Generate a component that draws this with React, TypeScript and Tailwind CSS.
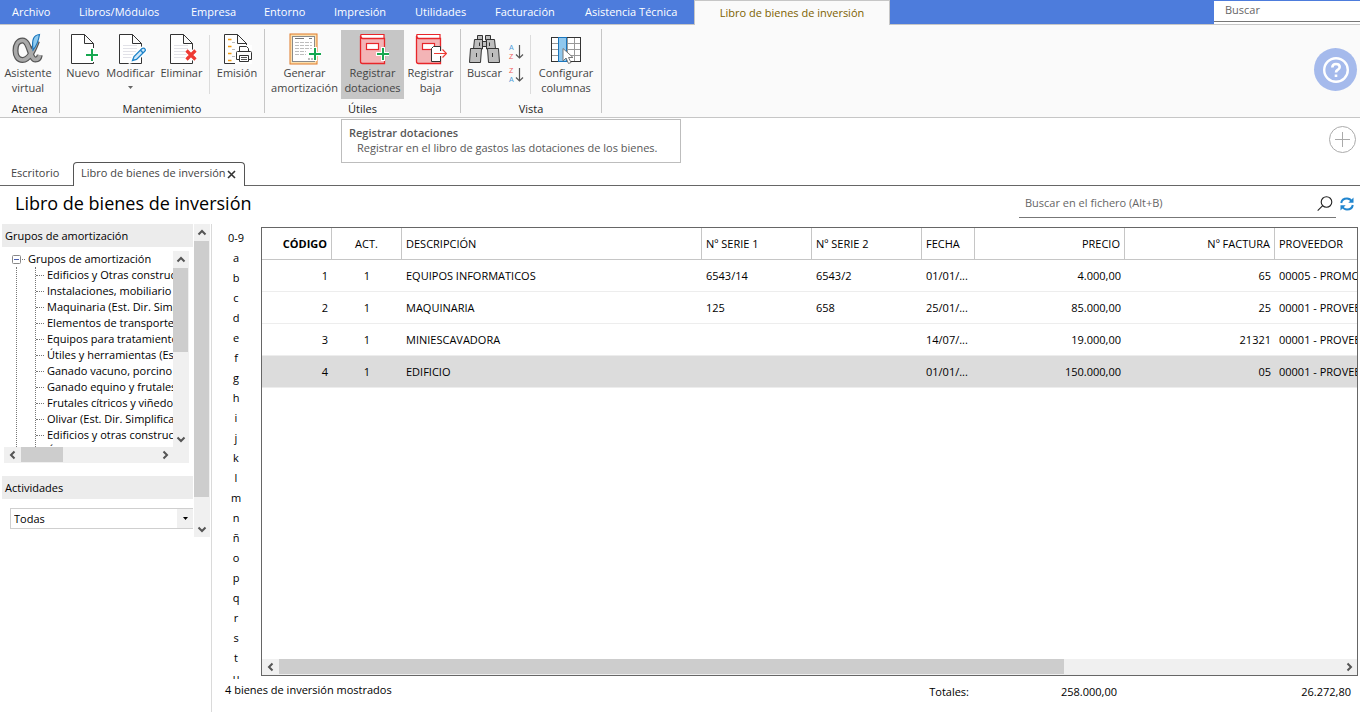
import React from "react";

/* ---------- Icons ---------- */

type IconProps = { children: React.ReactNode };

function Icon({ children }: IconProps) {
  return (
    <svg width="32" height="32" viewBox="0 0 32 32" fill="none" aria-hidden="true" className="shrink-0">
      {children}
    </svg>
  );
}

function Page() {
  return <path d="M4.500 1.500H17.500L26.500 10.500V30.500H4.500ZM17.500 1.500V10.500H26.500" fill="#fff" stroke="#333" />;
}

function PageLines() {
  return <path d="M8 12.500H22M8 15.500H22M8 18.500H22M8 21.500H22M8 24.500H20" stroke="#e2e2e8" />;
}

function Plus({ x, y }: { x: number; y: number }) {
  return (
    <g transform={`translate(${x} ${y})`}>
      <path d="M-7 0H7M0 -7V7" stroke="#fff" strokeWidth="4" />
      <path d="M-6 0H6M0 -6V6" stroke="#16a750" strokeWidth="2" />
    </g>
  );
}

function AlphaIcon() {
  const loop =
    "M25 8C22 16 17.500 27 10.500 27C6 27 3.500 23 3.500 17.500C3.500 12 6 7.500 10.500 7.500C18 7.500 17.500 26.500 23.500 26.500C26 26.500 27.300 25 27.800 22";
  return (
    <Icon>
      <path d={loop} stroke="#555" strokeWidth="6" />
      <path d={loop} stroke="#a9a9a9" strokeWidth="3.600" />
      <path d="M27.500 1.500C22 2 19.500 6 21 17C24.500 13 26.500 8 27.500 1.500Z" fill="#8fcbf0" stroke="#1b75bb" strokeWidth="1.200" />
    </Icon>
  );
}

function NewIcon() {
  return (
    <Icon>
      <Page />
      <Plus x={25} y={22} />
    </Icon>
  );
}

function EditIcon() {
  return (
    <Icon>
      <Page />
      <PageLines />
      <path d="M17 28L19 23.500L27 15.500Q29 14.500 30 16Q31 17.500 29.500 18.500L21.500 26.500Z" fill="#fff" stroke="#fff" strokeWidth="4" />
      <path d="M17.500 27.500L19 23.500L27 15.500Q29 14.500 30 16Q31 17.500 29.500 18.500L21.500 26.500ZM25.500 17L28 20" fill="#cfe8fa" stroke="#1d83c9" strokeWidth="1.300" />
    </Icon>
  );
}

function DeleteIcon() {
  return (
    <Icon>
      <Page />
      <PageLines />
      <path d="M20.500 17.500L29.500 26.500M29.500 17.500L20.500 26.500" stroke="#fff" strokeWidth="5.500" />
      <path d="M20.500 17.500L29.500 26.500M29.500 17.500L20.500 26.500" stroke="#ee3a33" strokeWidth="3.200" />
    </Icon>
  );
}

function PrintIcon() {
  return (
    <Icon>
      <path d="M3.500 1.500H16.500L25.500 10.500V30.500H3.500ZM16.500 1.500V10.500H25.500" fill="#fff" stroke="#333" />
      <path d="M7 6.500H10.500M7 13.500H10.500M7 20.500H10.500M7 27.500H10.500" stroke="#f39c12" strokeWidth="1.600" />
      <path d="M11 9.500H14M11 16.500H14M11 23.500H14" stroke="#bbb" />
      <path d="M14 12H31V31H14Z" fill="#fff" />
      <path d="M18.500 19V13.500H25.500L27.500 15.500V19" fill="#fff" stroke="#333" />
      <path d="M18 26.500H15.500V19.500Q15.500 18.500 16.500 18.500H29.500Q30.500 18.500 30.500 19.500V26.500H28" fill="#fff" stroke="#333" />
      <path d="M18.500 22.500H27.500V28.500H18.500Z" fill="#fff" stroke="#333" />
      <path d="M20 24.500H26M20 26.500H26" stroke="#555" />
    </Icon>
  );
}

function GenerateIcon() {
  return (
    <Icon>
      <rect x="1" y="1" width="27" height="30" fill="#fbe0b0" stroke="#e07b28" />
      <rect x="3.500" y="3.500" width="22" height="25" fill="#fff" stroke="#8a8a8a" />
      <path d="M6 5.500H15M20 5.500H23" stroke="#777" />
      <path d="M6 9.500H23M6 12.500H23M6 15.500H23M6 18.500H17M6 21.500H17" stroke="#bdbdbd" strokeDasharray="4 1" />
      <path d="M19 26H24" stroke="#bdbdbd" strokeWidth="2" strokeDasharray="2 1" />
      <Plus x={26} y={21} />
    </Icon>
  );
}

function Book() {
  return (
    <>
      <path d="M4 1.500H27V5.500H5Q3 4 4 1.500Z" fill="#fff" stroke="#e8262a" strokeWidth="1.200" />
      <path d="M3.500 3Q3.500 5.500 6 5.500H27.500V30.500H5.500Q3.500 30.500 3.500 28.500Z" fill="#f3b4b6" stroke="#e8262a" strokeWidth="1.300" />
      <rect x="9.500" y="10.500" width="12" height="6" fill="#fff" stroke="#e8262a" strokeWidth="1.200" />
    </>
  );
}

function RegisterIcon() {
  return (
    <Icon>
      <Book />
      <Plus x={26} y={21} />
    </Icon>
  );
}

function RetireIcon() {
  return (
    <svg width="32" height="32" viewBox="2 0 32 32" fill="none" aria-hidden="true" className="shrink-0">
      <Book />
      <path d="M18.500 28.500V15.500L20.500 13.500H27.500V28.500Z" fill="#fff" stroke="#333" />
      <path d="M27 18H30V23H27Z" fill="#fff" />
      <path d="M21 20.500H33.500M29.500 16.500L33.500 20.500L29.500 24.500" stroke="#ee3a33" strokeWidth="1.200" />
    </svg>
  );
}

function BinocularsIcon() {
  return (
    <Icon>
      <g fill="#bdbdbd" stroke="#333">
        <path d="M13.500 8.500H17.500V13.500H13.500Z" />
        <path d="M8.500 2.500H13.500V7H8.500ZM16.500 2.500H21.500V7H16.500Z" />
        <path d="M5.500 6.500H13.500V16H4.500ZM17.500 6.500H25.500L26.500 16H17.500Z" />
        <path d="M1.500 15.500H12.500L11.500 29.500H0.500ZM18.500 15.500H29.500L30.500 29.500H19.500Z" />
        <path d="M10.500 9.500V13M20.500 9.500V13M7.500 20V24M23.500 20V24" />
      </g>
    </Icon>
  );
}

function SortIcon({ first, second }: { first: string; second: string }) {
  const tone = (letter: string) => (letter === "A" ? "#4a9ad8" : "#ee5a5a");
  return (
    <svg width="16" height="18" viewBox="0 0 16 18" fill="none" aria-hidden="true" className="font-['Liberation_Sans',sans-serif]">
      <text x="1" y="7" fontSize="7" fill={tone(first)}>{first}</text>
      <text x="1" y="16" fontSize="7" fill={tone(second)}>{second}</text>
      <path d="M11.500 2V15M8 11.500L11.500 15L15 11.500" stroke="#555" strokeWidth="1.200" />
    </svg>
  );
}

function ColumnsIcon() {
  return (
    <Icon>
      <rect x="1.500" y="4.500" width="29" height="24" fill="#fff" />
      <path d="M2 10.500H30M2 16.500H30M2 22.500H30M17.500 5V28M24.500 5V28" stroke="#999" />
      <rect x="1.500" y="4.500" width="29" height="24" stroke="#333" />
      <rect x="8.500" y="4.500" width="8" height="24" fill="#90c8ee" stroke="#1b75bb" />
      <path d="M13 15.500V28L16 25L18.500 30.500L21 29.500L18.500 24.500H23Z" fill="#fff" stroke="#777" />
    </Icon>
  );
}

function HelpIcon() {
  return (
    <svg width="28" height="28" viewBox="0 0 28 28" fill="none" stroke="#fff" aria-hidden="true">
      <circle cx="14" cy="14" r="11.800" strokeWidth="2.400" />
      <path d="M10.300 11.500Q10.300 8 14 8Q17.700 8 17.700 11Q17.700 13 15.500 14Q14 14.800 14 16.500" strokeWidth="2.600" />
      <path d="M14 18.500V21" strokeWidth="2.600" />
    </svg>
  );
}

function Chevron({ dir }: { dir: "up" | "down" | "left" | "right" }) {
  const d = {
    up: "M1.500 6.500L5 3L8.500 6.500",
    down: "M1.500 3.500L5 7L8.500 3.500",
    left: "M6.500 1.500L3 5L6.500 8.500",
    right: "M3.500 1.500L7 5L3.500 8.500",
  }[dir];
  return (
    <svg width="10" height="10" viewBox="0 0 10 10" fill="none" stroke="#555" strokeWidth="2" aria-hidden="true">
      <path d={d} />
    </svg>
  );
}

/* ---------- Scrollbars ---------- */

function VScroll({ className, thumb }: { className: string; thumb: string }) {
  return (
    <div className={`flex w-4 shrink-0 flex-col bg-[#f0f0f0] pr-px ${className}`}>
      <button aria-label="Subir" className="flex h-[17px] items-center justify-center"><Chevron dir="up" /></button>
      <div className={`bg-[#cdcdcd] ${thumb}`} />
      <button aria-label="Bajar" className="mt-auto flex h-[17px] items-center justify-center"><Chevron dir="down" /></button>
    </div>
  );
}

function HScroll({ className, thumb }: { className: string; thumb: string }) {
  return (
    <div className={`flex h-4 shrink-0 bg-[#f0f0f0] ${className}`}>
      <button aria-label="Desplazar a la izquierda" className="flex w-[17px] shrink-0 items-center justify-center"><Chevron dir="left" /></button>
      <div className="flex min-w-0 flex-1"><div className={`h-[15px] bg-[#cdcdcd] ${thumb}`} /></div>
      <button aria-label="Desplazar a la derecha" className="flex w-[17px] shrink-0 items-center justify-center"><Chevron dir="right" /></button>
    </div>
  );
}

/* ---------- Ribbon ---------- */

type ToolProps = { icon: React.ReactNode; lines: string[]; width: string; active?: boolean; menu?: boolean };

function Tool({ icon, lines, width, active, menu }: ToolProps) {
  return (
    <button
      className={`flex h-[69px] shrink-0 flex-col items-center pt-[3px] leading-[15px] whitespace-nowrap text-[#444] ${width} ${active ? "bg-[#c6c6c6]" : ""}`}
    >
      {icon}
      {lines.map((line) => (
        <span key={line}>{line}</span>
      ))}
      {menu && (
        <svg width="5" height="3" viewBox="0 0 5 3" className="mt-[6px]" aria-hidden="true">
          <path d="M0 0H5L2.500 3Z" fill="#666" />
        </svg>
      )}
    </button>
  );
}

function Group({ name, width, children }: { name: string; width: string; children: React.ReactNode }) {
  return (
    <section aria-label={name} className={`my-1 flex shrink-0 flex-col border-r border-[#c6c6c6] ${width}`}>
      <div className="flex pt-px">{children}</div>
      <h2 className="mt-[2px] text-center leading-4 text-[#222]">{name}</h2>
    </section>
  );
}

function Separator() {
  return <div className="mx-1 mt-[5px] h-[59px] w-px bg-[#dcdcdc]" />;
}

const menus: [string, string][] = [
  ["Archivo", "w-[65px] pl-3"],
  ["Libros/Módulos", "w-[112px] pl-[14px]"],
  ["Empresa", "w-[73px] pl-[14px]"],
  ["Entorno", "w-[70px] pl-[14px]"],
  ["Impresión", "w-[81px] pl-[14px]"],
  ["Utilidades", "w-[80px] pl-[14px]"],
  ["Facturación", "w-[90px] pl-[14px]"],
  ["Asistencia Técnica", "w-[123px] pl-[14px]"],
];

const groups = [
  "Edificios y Otras construcciones",
  "Instalaciones, mobiliario y enseres",
  "Maquinaria (Est. Dir. Simplificada)",
  "Elementos de transporte",
  "Equipos para tratamiento",
  "Útiles y herramientas (Est. Dir.)",
  "Ganado vacuno, porcino",
  "Ganado equino y frutales",
  "Frutales cítricos y viñedos",
  "Olivar (Est. Dir. Simplificada)",
  "Edificios y otras construcciones",
  "Útiles y herramientas",
];

const letters = ["0-9", ..."abcdefghijklmnñopqrstu".split("")];

type Align = "text-left" | "text-center" | "text-right";
const columns: [string, string, Align][] = [
  ["CÓDIGO", "w-[70px]", "text-right"],
  ["ACT.", "w-[70px]", "text-center"],
  ["DESCRIPCIÓN", "w-[300px]", "text-left"],
  ["Nº SERIE 1", "w-[110px]", "text-left"],
  ["Nº SERIE 2", "w-[110px]", "text-left"],
  ["FECHA", "w-[53px]", "text-left"],
  ["PRECIO", "w-[150px]", "text-right"],
  ["Nº FACTURA", "w-[150px]", "text-right"],
  ["PROVEEDOR", "", "text-left"],
];

const rows = [
  ["1", "1", "EQUIPOS INFORMATICOS", "6543/14", "6543/2", "01/01/...", "4.000,00", "65", "00005 - PROMOCIONES"],
  ["2", "1", "MAQUINARIA", "125", "658", "25/01/...", "85.000,00", "25", "00001 - PROVEEDOR"],
  ["3", "1", "MINIESCAVADORA", "", "", "14/07/...", "19.000,00", "21321", "00001 - PROVEEDOR"],
  ["4", "1", "EDIFICIO", "", "", "01/01/...", "150.000,00", "05", "00001 - PROVEEDOR"],
];

export default function App() {
  return (
    <div className="flex h-screen flex-col overflow-hidden bg-white font-['Open_Sans','Noto_Sans',sans-serif] text-[11px] text-black">
      <nav className="flex h-[25px] shrink-0 bg-[#4d7cdc] text-white">
        {menus.map(([name, cls]) => (
          <button key={name} className={`shrink-0 border-b border-[#c6c6c6] text-left whitespace-nowrap ${cls}`}>{name}</button>
        ))}
        <button className="w-[196px] shrink-0 border border-b-0 border-[#c6c6c6] bg-[#fafafa] text-[#7d6100]">Libro de bienes de inversión</button>
        <div className="flex flex-1 justify-end border-b border-[#c6c6c6]">
          <div className="mt-px flex w-[146px] bg-white pb-[2px]">
            <input aria-label="Buscar" placeholder="Buscar" className="w-full border-b border-[#777] pl-[11px] pb-[2px] outline-none placeholder:text-[#666]" />
          </div>
        </div>
      </nav>

      <div className="flex h-[93px] shrink-0 border-b border-[#c6c6c6] bg-[#fafafa]">
        <Group name="Atenea" width="w-[60px]">
          <Tool icon={<AlphaIcon />} lines={["Asistente", "virtual"]} width="w-14" />
        </Group>
        <Group name="Mantenimiento" width="w-[205px]">
          <div className="flex pl-[3px]">
            <Tool icon={<NewIcon />} lines={["Nuevo"]} width="w-10" />
            <Tool icon={<EditIcon />} lines={["Modificar"]} width="w-[55px]" menu />
            <Tool icon={<DeleteIcon />} lines={["Eliminar"]} width="w-[47px]" />
          </div>
          <Separator />
          <Tool icon={<PrintIcon />} lines={["Emisión"]} width="w-[46px]" />
        </Group>
        <Group name="Útiles" width="w-[196px]">
          <div className="flex pl-[3px]">
            <Tool icon={<GenerateIcon />} lines={["Generar", "amortización"]} width="w-[73px]" />
            <div className="relative">
              <Tool icon={<RegisterIcon />} lines={["Registrar", "dotaciones"]} width="w-[63px]" active />
              <div role="tooltip" className="absolute top-[89px] left-0 z-10 h-[44px] w-[340px] border border-[#bdbdbd] bg-white px-[7px] pt-[5px] leading-[15px] text-[#575757]">
                <p className="font-semibold">Registrar dotaciones</p>
                <p className="pl-2">Registrar en el libro de gastos las dotaciones de los bienes.</p>
              </div>
            </div>
            <Tool icon={<RetireIcon />} lines={["Registrar", "baja"]} width="w-[53px]" />
          </div>
        </Group>
        <Group name="Vista" width="w-[141px]">
          <div className="flex pl-[3px]">
            <Tool icon={<BinocularsIcon />} lines={["Buscar"]} width="w-[41px]" />
            <div className="flex w-[21px] flex-col items-center gap-[5px] pt-[13px]">
              <button aria-label="Orden ascendente"><SortIcon first="A" second="Z" /></button>
              <button aria-label="Orden descendente"><SortIcon first="Z" second="A" /></button>
            </div>
          </div>
          <Separator />
          <Tool icon={<ColumnsIcon />} lines={["Configurar", "columnas"]} width="w-[62px]" />
        </Group>
        <button aria-label="Ayuda" className="mt-[23px] mr-[3px] ml-auto flex size-[43px] items-center justify-center rounded-full bg-[#a5baec]">
          <HelpIcon />
        </button>
      </div>

      <div className="flex h-[68px] shrink-0 text-[#444]">
        <div className="w-[73px] border-b border-[#666] pt-11">
          <button className="h-[23px] pl-[11px]">Escritorio</button>
        </div>
        <div className="mt-11 flex w-[172px] items-center justify-between rounded-t-[4px] border border-b-0 border-[#555] pr-2 pb-[2px] pl-[7px]">
          <span className="whitespace-nowrap">Libro de bienes de inversión</span>
          <button aria-label="Cerrar" className="pt-px">
            <svg width="9" height="9" viewBox="0 0 9 9" stroke="#333" strokeWidth="1.600" aria-hidden="true">
              <path d="M1 1L8 8M8 1L1 8" />
            </svg>
          </button>
        </div>
        <div className="flex flex-1 items-start justify-end border-b border-[#666] pt-2 pr-1">
          <button aria-label="Añadir">
            <svg width="27" height="27" viewBox="0 0 27 27" fill="none" stroke="#aaa" aria-hidden="true">
              <circle cx="13.500" cy="13.500" r="13" />
              <path d="M6 13.500H21M13.500 6V21" />
            </svg>
          </button>
        </div>
      </div>

      <div className="flex h-[38px] shrink-0 items-start justify-between pr-[6px] pl-[15px]">
        <h1 className="text-[18px] leading-[34px]">Libro de bienes de inversión</h1>
        <div className="flex items-center">
          <div className="flex h-8 w-[317px] items-center border-b border-[#777] pt-1 pr-[3px] pl-[6px]">
            <input aria-label="Buscar en el fichero" placeholder="Buscar en el fichero (Alt+B)" className="min-w-0 flex-1 outline-none placeholder:text-[#666]" />
            <svg width="16" height="16" viewBox="0 0 16 16" fill="none" stroke="#222" strokeWidth="1.100" aria-hidden="true">
              <circle cx="9.500" cy="6" r="5.300" />
              <path d="M5.700 9.700L0.700 14.700" />
            </svg>
          </div>
          <button aria-label="Actualizar" className="mt-1 ml-1">
            <svg width="14" height="14" viewBox="0 0 14 14" fill="none" stroke="#2286cf" strokeWidth="2" aria-hidden="true">
              <path d="M1.200 6Q2 1.500 7 1.500Q10 1.500 12 4.500M12.800 8Q12 12.500 7 12.500Q4 12.500 2 9.500" />
              <path d="M13.500 0.500V5.700H8.300ZM0.500 13.500V8.300H5.700Z" fill="#2286cf" stroke="none" />
            </svg>
          </button>
        </div>
      </div>

      <main className="flex min-h-0 flex-1">
        <aside className="flex w-[212px] shrink-0 items-start border-r border-[#dadada] pl-[2px]">
          <div className="w-[191px] shrink-0">
            <h2 className="h-[23px] bg-[#ececec] pl-[3px] leading-6">Grupos de amortización</h2>
            <div className="mt-1 ml-[2px] w-[185px]">
              <div className="flex h-[196px]">
                <div className="min-w-0 flex-1 overflow-hidden">
                  <div className="flex h-4 items-center pl-2">
                    <svg width="9" height="9" viewBox="0 0 9 9" fill="#fff" stroke="#888" aria-hidden="true">
                      <rect x="0.500" y="0.500" width="8" height="8" rx="1" />
                      <path d="M2 4.500H7" stroke="#4a5fb0" />
                    </svg>
                    <span className="ml-px w-[3px] border-t border-dotted border-[#777]" />
                    <span className="ml-[3px] whitespace-nowrap">Grupos de amortización</span>
                  </div>
                  <div className="ml-3 border-l border-dotted border-[#777] pl-[18px]">
                    <ul className="border-l border-dotted border-[#777]">
                      {groups.map((name) => (
                        <li key={name} className="flex h-4 items-center">
                          <span className="w-2 shrink-0 border-t border-dotted border-[#777]" />
                          <span className="ml-[3px] min-w-0 flex-1 overflow-hidden whitespace-nowrap">{name}</span>
                        </li>
                      ))}
                    </ul>
                  </div>
                </div>
                <VScroll className="h-[196px]" thumb="h-[84px]" />
              </div>
              <HScroll className="pr-4" thumb="w-[42px]" />
            </div>
            <h2 className="mt-[13px] h-[23px] bg-[#ececec] pl-[3px] leading-6">Actividades</h2>
            <div className="relative mt-[9px] ml-2 flex h-[21px] border border-r-0 border-[#cfcfcf]">
              <select aria-label="Actividades" className="w-full appearance-none bg-white pt-px pl-[3px] outline-none">
                <option>Todas</option>
              </select>
              <span className="pointer-events-none absolute inset-y-0 right-0 flex w-4 items-center justify-center bg-[#f0f0f0]">
                <svg width="5" height="3" viewBox="0 0 5 3" aria-hidden="true"><path d="M0 0H5L2.500 3Z" /></svg>
              </span>
            </div>
          </div>
          <VScroll className="ml-px h-[313px]" thumb="h-[256px]" />
        </aside>

        <div className="flex min-w-0 flex-1 flex-col">
          <div className="flex min-h-0 flex-1">
            <div className="w-[49px] shrink-0 overflow-hidden pt-1">
              {letters.map((l) => (
                <button key={l} className="block h-5 w-12 text-center leading-5">{l}</button>
              ))}
            </div>
            <div className="mt-[3px] mr-[2px] mb-[3px] flex min-w-0 flex-1 flex-col border border-[#666]">
              <div className="min-h-0 flex-1 overflow-hidden">
                <table className="w-full table-fixed border-separate border-spacing-0">
                  <thead>
                    <tr className="h-8">
                      {columns.map(([name, width, align], i) => (
                        <th
                          key={name}
                          className={`overflow-hidden border-b border-[#c6c6c6] px-1 pt-[2px] whitespace-nowrap ${width} ${align} ${i === 0 ? "font-bold" : "font-normal"} ${i < 8 ? "border-r" : ""}`}
                        >
                          {name}
                        </th>
                      ))}
                    </tr>
                  </thead>
                  <tbody>
                    {rows.map((row, r) => (
                      <tr key={row[0]} className={`h-8 ${r === 3 ? "bg-[#dcdcdc]" : ""}`}>
                        {row.map((cell, c) => (
                          <td key={c} className={`overflow-hidden border-b border-[#ededed] px-1 pt-[2px] whitespace-nowrap ${columns[c][2]}`}>{cell}</td>
                        ))}
                      </tr>
                    ))}
                  </tbody>
                </table>
              </div>
              <HScroll className="" thumb="w-[74%]" />
            </div>
          </div>
          <footer className="flex h-[33px] shrink-0 pt-[3px] pr-[9px] pl-[13px] leading-4">
            <span>4 bienes de inversión mostrados</span>
            <div className="ml-auto flex pt-[2px] text-right">
              <span>Totales:</span>
              <span className="w-[148px]">258.000,00</span>
              <span className="w-[234px]">26.272,80</span>
            </div>
          </footer>
        </div>
      </main>
    </div>
  );
}
